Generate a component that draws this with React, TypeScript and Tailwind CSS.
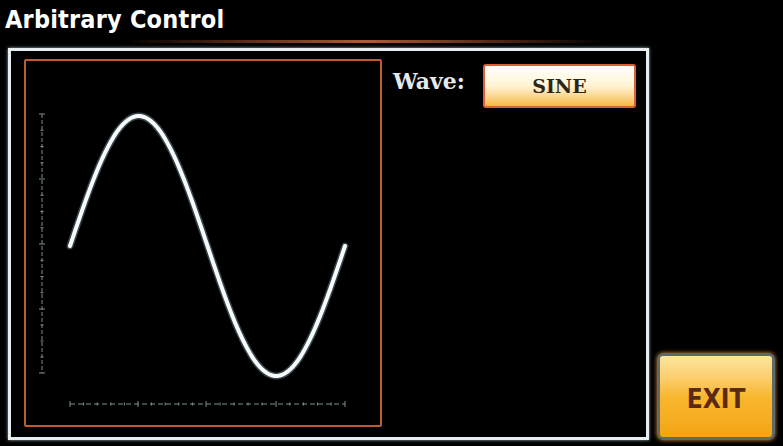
import React from 'react';

const narrow = { fontFamily: '"Liberation Sans Narrow", "DejaVu Sans Condensed", "Liberation Sans", sans-serif' };
const serif = { fontFamily: '"DejaVu Serif", "Liberation Serif", serif' };

// sine wave in page coordinates
const sinePath = (() => {
  const x0 = 70;
  const x1 = 345;
  const cy = 246;
  const amp = 130;
  const pts: string[] = [];
  for (let i = 0; i <= 110; i++) {
    const x = x0 + ((x1 - x0) * i) / 110;
    const y = cy - amp * Math.sin(((x - x0) / (x1 - x0)) * Math.PI * 2);
    pts.push(`${i === 0 ? 'M' : 'L'}${x.toFixed(1)} ${y.toFixed(1)}`);
  }
  return pts.join(' ');
})();

const yMajor = [114, 179, 244, 309, 373];
const xMajor = [70, 138, 206, 276, 345];

function WaveChart() {
  const minorY: number[] = [];
  for (let i = 0; i < yMajor.length - 1; i++) {
    const step = (yMajor[i + 1] - yMajor[i]) / 4;
    for (let k = 1; k < 4; k++) minorY.push(yMajor[i] + step * k);
  }
  const minorX: number[] = [];
  for (let i = 0; i < xMajor.length - 1; i++) {
    const step = (xMajor[i + 1] - xMajor[i]) / 5;
    for (let k = 1; k < 5; k++) minorX.push(xMajor[i] + step * k);
  }
  return (
    <svg width="354" height="364" viewBox="26 61 354 364" className="block">
      <g stroke="#7f908c" strokeWidth="1">
        <line x1="42" y1={yMajor[0]} x2="42" y2={yMajor[4]} strokeDasharray="4 2" />
        {yMajor.map((y) => (
          <line key={`ym${y}`} x1="39" y1={y} x2="45" y2={y} />
        ))}
        {minorY.map((y) => (
          <line key={`yn${y}`} x1="40.5" y1={y} x2="43.5" y2={y} />
        ))}
        <line x1={xMajor[0]} y1="404" x2={xMajor[4]} y2="404" strokeDasharray="5 3" />
        {xMajor.map((x) => (
          <line key={`xm${x}`} x1={x} y1="401" x2={x} y2="407" />
        ))}
        {minorX.map((x) => (
          <line key={`xn${x}`} x1={x} y1="402.5" x2={x} y2="405.5" />
        ))}
      </g>
      <path d={sinePath} fill="none" stroke="#9fc7d6" strokeOpacity="0.35" strokeWidth="7" strokeLinecap="round" />
      <path d={sinePath} fill="none" stroke="#f6fafb" strokeWidth="4" strokeLinecap="round" />
    </svg>
  );
}

export default function App() {
  return (
    <div className="w-[783px] h-[446px] bg-black overflow-hidden flex flex-col">
      {/* title */}
      <div className="h-[40px] pl-[5px] pt-[7px]">
        <h1 className="text-[25px] font-bold leading-none text-white tracking-[0.2px]" style={narrow}>
          Arbitrary Control
        </h1>
      </div>
      <div className="h-[3px] ml-[125px] w-[480px] bg-gradient-to-r from-transparent via-[#c8643a] to-transparent opacity-90" />
      <div className="h-[5px]" />

      <div className="flex flex-1 pl-[8px] pb-[6px]">
        {/* main frame */}
        <div className="w-[641px] h-[392px] border-[3px] border-[#e6eef1] shadow-[0_0_3px_#9fb7c0] flex pl-[13px] pt-[8px]">
          <div className="w-[358px] h-[368px] border-2 border-[#c15a2e] rounded-[2px]">
            <WaveChart />
          </div>
          <div className="flex items-start pl-[11px] pt-[5px]">
            <span className="w-[90px] text-[22px] font-bold text-[#e4eaec] leading-none pt-[6px]" style={serif}>
              Wave:
            </span>
            <button
              className="w-[153px] h-[44px] rounded-[3px] border-2 border-[#d8603a] bg-gradient-to-b from-white via-[#fff4d2] to-[#f6b93e] text-[19px] font-bold text-[#2b2618] flex items-center justify-center"
              style={serif}
            >
              SINE
            </button>
          </div>
        </div>

        {/* right column */}
        <div className="flex-1 flex flex-col justify-end pl-[8px] pr-[6px]">
          <button
            className="w-[118px] h-[87px] rounded-[6px] border-[3px] border-[#5f6a69] bg-gradient-to-b from-[#fde7a0] via-[#f9b72e] to-[#f3a512] shadow-[0_0_4px_#e08a30] flex items-center justify-center pt-[4px] text-[26px] font-bold text-[#5a2a12] leading-none"
            style={narrow}
          >
            EXIT
          </button>
        </div>
      </div>
    </div>
  );
}
